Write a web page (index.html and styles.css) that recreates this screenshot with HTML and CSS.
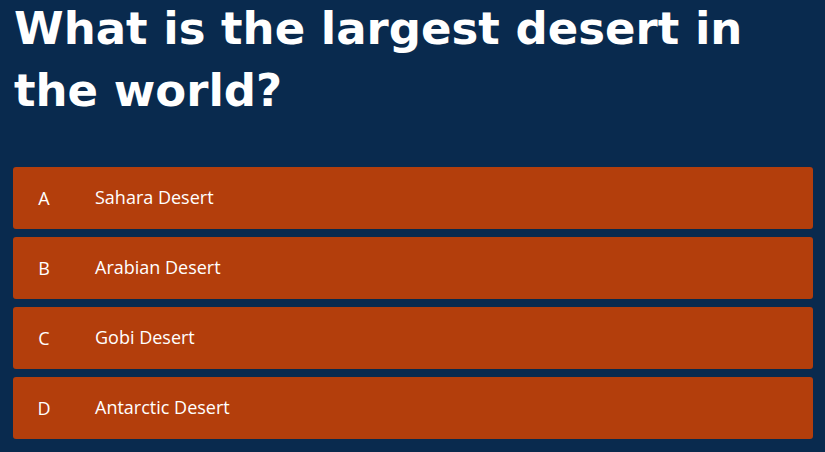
FILE: index.html
```html
<!DOCTYPE html>
<html>
<head>
<meta charset="utf-8">
<link rel="stylesheet" href="styles.css">
</head>
<body>
<div class="quiz">
  <h1 class="question">What is the largest desert in the world?</h1>
  <div class="options">
    <div class="option"><span class="letter">A</span><span class="label">Sahara Desert</span></div>
    <div class="option"><span class="letter">B</span><span class="label">Arabian Desert</span></div>
    <div class="option"><span class="letter">C</span><span class="label">Gobi Desert</span></div>
    <div class="option"><span class="letter">D</span><span class="label">Antarctic Desert</span></div>
  </div>
</div>
</body>
</html>
```
FILE: styles.css
```css
html, body {
  margin: 0;
  padding: 0;
  background: #092a4e;
  height: 100%;
  overflow: hidden;
}
.quiz {
  padding: 0 12px 0 13px;
  font-family: "Open Sans", "DejaVu Sans", sans-serif;
  color: #ffffff;
}
.question {
  margin: 0;
  padding: 0 0 0 1px;
  font-family: "DejaVu Sans", "Open Sans", sans-serif;
  font-size: 45px;
  line-height: 62px;
  font-weight: 700;
  margin-top: -2px;
  width: 770px;
}
.options {
  display: flex;
  flex-direction: column;
  gap: 8px;
  margin-top: 45px;
}
.option {
  display: flex;
  align-items: center;
  height: 62px;
  background: #b33e0c;
  border-radius: 3px;
  font-size: 18px;
  font-weight: 500;
}
.letter {
  width: 62px;
  text-align: center;
}
.label {
  margin-left: 20px;
  padding-bottom: 2px;
}
```
